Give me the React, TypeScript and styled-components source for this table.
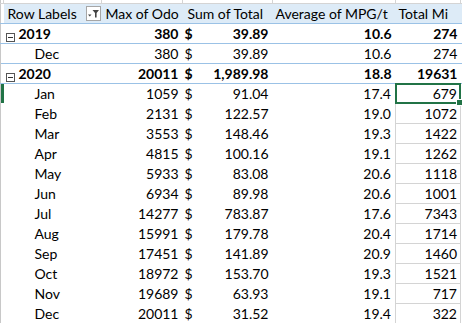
import * as React from 'react'
import styled, { createGlobalStyle, css } from 'styled-components'

const GlobalStyle = createGlobalStyle`
html, body {
	margin: 0;
	padding: 0;
	background: #FFFFFF;
}
body {
	font-family: Lato, "Liberation Sans", sans-serif;
	font-size: 14px;
	color: #000000;
}
`

const GRID = '#D4D4D4'
const BLUE_LINE = '#9BC2E6'
const HEAD_FILL = '#DDEBF7'
const SELECT = '#217346'

const Sheet = styled.table`
border-collapse: collapse;
table-layout: fixed;
width: 462px;
`

const StubRow = styled.tr`
height: 3px;
td {
	border-right: 1px solid ${GRID};
	border-bottom: 1px solid ${GRID};
	padding: 0;
}
`

const Row = styled.tr<{ $kind?: 'head' | 'year' | 'month' }>`
height: 20px;
${ p => p.$kind === 'head' && css`
	background: ${HEAD_FILL};
	td { border-bottom: 1px solid ${BLUE_LINE}; }
` }
${ p => p.$kind === 'year' && css`
	font-weight: 700;
	td {
		border-top: 1px solid ${BLUE_LINE};
		border-bottom: 1px solid ${BLUE_LINE};
	}
` }
`

const Cell = styled.td<{ $right?: boolean, $indent?: number }>`
padding: 0 4px 0 ${ p => p.$indent ?? 3 }px;
text-align: ${ p => p.$right ? 'right' : 'left' };
white-space: nowrap;
overflow: hidden;
line-height: 19px;
vertical-align: bottom;
`

const GridCell = styled(Cell)<{ $lined?: boolean, $selected?: boolean }>`
padding-right: 3px;
position: relative;
overflow: visible;
${ p => p.$lined && css`
	border-left: 1px solid ${GRID};
	border-right: 1px solid ${GRID};
	border-bottom: 1px solid ${GRID};
` }
${ p => p.$selected && css`
	&::after {
		content: '';
		position: absolute;
		left: -1px;
		top: -1px;
		right: -1px;
		bottom: -1px;
		border: 2px solid ${SELECT};
	}
	&::before {
		content: '';
		position: absolute;
		right: -3px;
		bottom: -3px;
		width: 5px;
		height: 5px;
		background: ${SELECT};
		border: 1px solid #FFFFFF;
		z-index: 1;
	}
` }
`

const Edge = styled.td<{ $active?: boolean }>`
padding: 0;
border-left: 1px solid #C8C8C8;
background: ${ p => p.$active ? SELECT : '#FFFFFF' };
`

const Money = styled.span`
display: flex;
justify-content: space-between;
`

const HeadWithFilter = styled.span`
display: flex;
align-items: center;
justify-content: space-between;
`

const FilterBtn = styled.span`
display: inline-flex;
align-items: center;
justify-content: center;
width: 15px;
height: 15px;
margin-right: -3px;
border: 1px solid #A6A6A6;
background: #FFFFFF;
box-sizing: border-box;
`

const Toggle = styled.span`
display: inline-flex;
align-items: center;
justify-content: center;
width: 9px;
height: 9px;
margin-right: 4px;
border: 1px solid #555555;
box-sizing: border-box;
vertical-align: 1px;
&::after {
	content: '';
	width: 5px;
	height: 1px;
	background: #333333;
}
`

interface Line {
	label: string
	year?: boolean
	odo: string
	total: string
	mpg: string
	miles: string
}

const lines: Line[] = [
	{ label: '2019', year: true, odo: '380', total: '39.89', mpg: '10.6', miles: '274' },
	{ label: 'Dec', odo: '380', total: '39.89', mpg: '10.6', miles: '274' },
	{ label: '2020', year: true, odo: '20011', total: '1,989.98', mpg: '18.8', miles: '19631' },
	{ label: 'Jan', odo: '1059', total: '91.04', mpg: '17.4', miles: '679' },
	{ label: 'Feb', odo: '2131', total: '122.57', mpg: '19.0', miles: '1072' },
	{ label: 'Mar', odo: '3553', total: '148.46', mpg: '19.3', miles: '1422' },
	{ label: 'Apr', odo: '4815', total: '100.16', mpg: '19.1', miles: '1262' },
	{ label: 'May', odo: '5933', total: '83.08', mpg: '20.6', miles: '1118' },
	{ label: 'Jun', odo: '6934', total: '89.98', mpg: '20.6', miles: '1001' },
	{ label: 'Jul', odo: '14277', total: '783.87', mpg: '17.6', miles: '7343' },
	{ label: 'Aug', odo: '15991', total: '179.78', mpg: '20.4', miles: '1714' },
	{ label: 'Sep', odo: '17451', total: '141.89', mpg: '20.9', miles: '1460' },
	{ label: 'Oct', odo: '18972', total: '153.70', mpg: '19.3', miles: '1521' },
	{ label: 'Nov', odo: '19689', total: '63.93', mpg: '19.1', miles: '717' },
	{ label: 'Dec', odo: '20011', total: '31.52', mpg: '19.4', miles: '322' },
]

const FilterIcon = () => (
	<svg width="13" height="13" viewBox="0 0 13 13">
		<path d="M1 7.5 L4.5 7.5 L2.75 9.5 Z" fill="#444444"/>
		<path d="M5.5 3 L12 3 L9.6 6 L9.6 10.5 L8 10.5 L8 6 Z" fill="#444444"/>
	</svg>
)

export default function App() {
	return (
		<>
			<GlobalStyle/>
			<Sheet>
				<colgroup>
					<col style={ { width: 3 } }/>
					<col style={ { width: 98 } }/>
					<col style={ { width: 81 } }/>
					<col style={ { width: 90 } }/>
					<col style={ { width: 123 } }/>
					<col style={ { width: 65 } }/>
					<col style={ { width: 2 } }/>
				</colgroup>
				<tbody>
					<StubRow>
						<Edge/><td/><td/><td/><td/><td/><td/>
					</StubRow>
					<Row $kind="head">
						<Edge/>
						<Cell $indent={ 4 }>
							<HeadWithFilter>
								Row Labels
								<FilterBtn><FilterIcon/></FilterBtn>
							</HeadWithFilter>
						</Cell>
						<Cell $indent={ 4 }>Max of Odo</Cell>
						<Cell $indent={ 5 }>Sum of Total</Cell>
						<Cell>Average of MPG/t</Cell>
						<Cell>Total Mi</Cell>
						<td/>
					</Row>
					{
						lines.map((l, i) => (
							<Row key={ i } $kind={ l.year ? 'year' : 'month' }>
								<Edge $active={ i === 3 }/>
								<Cell $indent={ l.year ? 2 : 31 }>
									{ l.year && <Toggle/> }
									{ l.label }
								</Cell>
								<Cell $right>{ l.odo }</Cell>
								<Cell $indent={ 2 }>
									<Money><span>$</span><span>{ l.total }</span></Money>
								</Cell>
								<Cell $right>{ l.mpg }</Cell>
								<GridCell $right $lined={ i >= 3 } $selected={ i === 3 }>{ l.miles }</GridCell>
								<td/>
							</Row>
						))
					}
				</tbody>
			</Sheet>
		</>
	)
}
